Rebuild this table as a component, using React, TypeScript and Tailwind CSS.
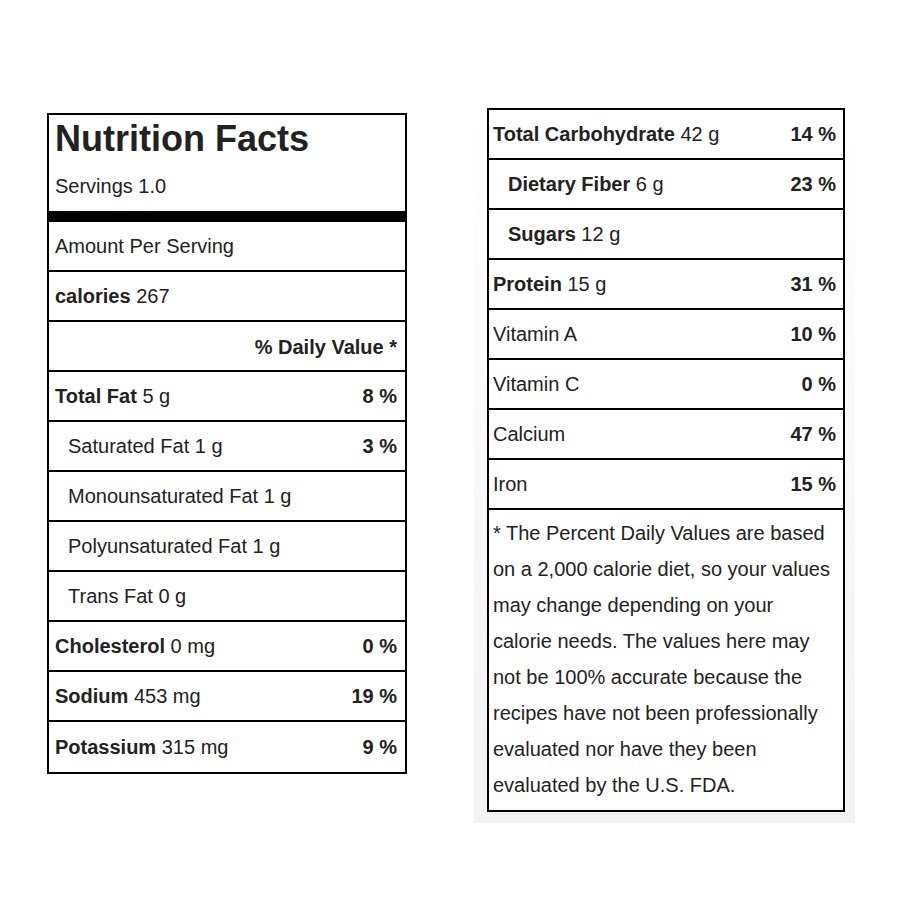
type Row = {
  label: string;
  amount?: string;
  dv?: string;
  bold?: boolean;
  indent?: boolean;
};

const leftRows: Row[] = [
  { label: "Total Fat", amount: "5 g", dv: "8 %", bold: true },
  { label: "Saturated Fat", amount: "1 g", dv: "3 %", indent: true },
  { label: "Monounsaturated Fat", amount: "1 g", indent: true },
  { label: "Polyunsaturated Fat", amount: "1 g", indent: true },
  { label: "Trans Fat", amount: "0 g", indent: true },
  { label: "Cholesterol", amount: "0 mg", dv: "0 %", bold: true },
  { label: "Sodium", amount: "453 mg", dv: "19 %", bold: true },
  { label: "Potassium", amount: "315 mg", dv: "9 %", bold: true },
];

const rightRows: Row[] = [
  { label: "Total Carbohydrate", amount: "42 g", dv: "14 %", bold: true },
  { label: "Dietary Fiber", amount: "6 g", dv: "23 %", bold: true, indent: true },
  { label: "Sugars", amount: "12 g", bold: true, indent: true },
  { label: "Protein", amount: "15 g", dv: "31 %", bold: true },
  { label: "Vitamin A", dv: "10 %" },
  { label: "Vitamin C", dv: "0 %" },
  { label: "Calcium", dv: "47 %" },
  { label: "Iron", dv: "15 %" },
];

const NutrientRow = ({ row, side, last }: { row: Row; side: "left" | "right"; last?: boolean }) => {
  const pad =
    side === "left"
      ? row.indent
        ? "pl-[19px] pr-[8px]"
        : "pl-[6px] pr-[8px]"
      : row.indent
        ? "pl-[19px] pr-[7px]"
        : "pl-[4px] pr-[7px]";
  return (
    <div
      className={`flex h-[50px] items-center justify-between border-black ${last ? "" : "border-b-2"} ${pad}`}
    >
      <span>
        {row.bold ? <span className="font-bold">{row.label}</span> : row.label}
        {row.amount ? ` ${row.amount}` : ""}
      </span>
      {row.dv && <span className="font-bold">{row.dv}</span>}
    </div>
  );
};

export default function App() {
  return (
    <div
      className="flex min-h-[900px] w-[900px] items-start bg-white text-[20px] text-[#222]"
      style={{ fontFamily: '"Liberation Sans", Arial, sans-serif' }}
    >
      {/* left label */}
      <div className="ml-[47px] mt-[113px] w-[360px] border-2 border-black bg-white">
        <div className="h-[96px] pl-[6px] pt-[6px]">
          <h1 className="text-[36px] font-bold leading-[36px]">Nutrition Facts</h1>
          <p className="mt-[19px] leading-[20px]">Servings 1.0</p>
        </div>
        <div className="h-[11px] bg-black" />
        <div className="flex h-[50px] items-center border-b-2 border-black pl-[6px]">
          Amount Per Serving
        </div>
        <div className="flex h-[50px] items-center border-b-2 border-black pl-[6px]">
          <span className="font-bold">calories</span>&nbsp;267
        </div>
        <div className="flex h-[50px] items-center justify-end border-b-2 border-black pr-[8px] pt-[2px] font-bold">
          % Daily Value *
        </div>
        {leftRows.map((r, i) => (
          <NutrientRow key={r.label} row={r} side="left" last={i === leftRows.length - 1} />
        ))}
      </div>

      {/* right label */}
      <div className="ml-[67px] mt-[95px] bg-gradient-to-b from-white to-[#f2f2f2] pb-[11px] pl-[13px] pr-[10px] pt-[13px]">
        <div className="w-[358px] border-2 border-black bg-white">
          {rightRows.map((r) => (
            <NutrientRow key={r.label} row={r} side="right" />
          ))}
          <p className="h-[300px] pl-[4px] pr-[8px] pt-[5px] leading-[36px]">
            * The Percent Daily Values are based on a 2,000 calorie diet, so your values may
            change depending on your calorie needs. The values here may not be 100% accurate
            because the recipes have not been professionally evaluated nor have they been
            evaluated by the U.S. FDA.
          </p>
        </div>
      </div>
    </div>
  );
}
